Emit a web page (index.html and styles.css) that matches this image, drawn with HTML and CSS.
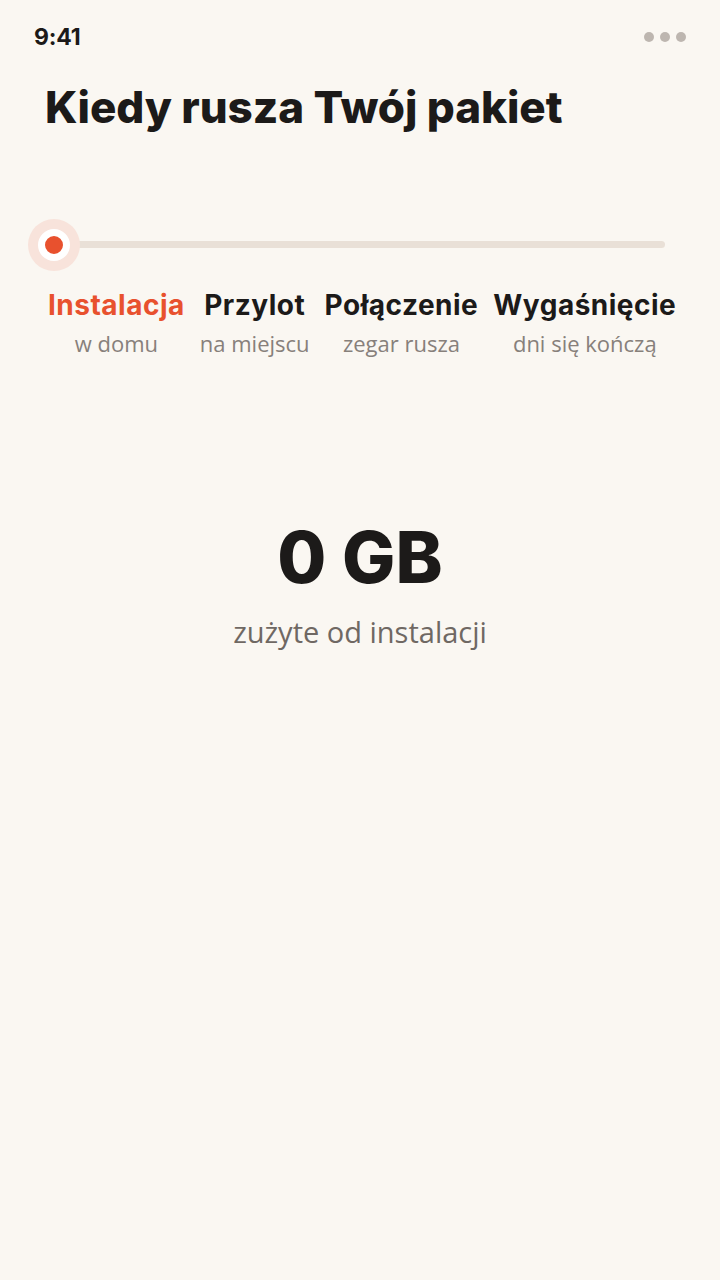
FILE: index.html
```html
<!DOCTYPE html>
<html lang="pl">
<head>
    <meta charset="UTF-8">
    <meta name="viewport" content="width=device-width, initial-scale=1.0">
    <title>Kiedy rusza Twój pakiet</title>
    <link rel="stylesheet" href="styles.css">
</head>
<body>
    <div class="status-bar">
        <span class="time">9:41</span>
        <span class="dots"><i></i><i></i><i></i></span>
    </div>

    <h1 class="title">Kiedy rusza Twój pakiet</h1>

    <!-- Slider -->
    <div class="slider">
        <div class="track"></div>
        <div class="thumb"><span class="thumb-dot"></span></div>
    </div>

    <div class="steps">
        <div class="step active">
            <span class="step-name">Instalacja</span>
            <span class="step-sub">w domu</span>
        </div>
        <div class="step">
            <span class="step-name">Przylot</span>
            <span class="step-sub">na miejscu</span>
        </div>
        <div class="step">
            <span class="step-name">Połączenie</span>
            <span class="step-sub">zegar rusza</span>
        </div>
        <div class="step">
            <span class="step-name">Wygaśnięcie</span>
            <span class="step-sub">dni się kończą</span>
        </div>
    </div>

    <div class="usage">
        <div class="usage-value">0 GB</div>
        <div class="usage-label">zużyte od instalacji</div>
    </div>
</body>
</html>
```

FILE: styles.css
```css
body {
    margin: 0;
    background-color: #faf7f2;
    font-family: Inter, "Liberation Sans", sans-serif;
    color: #1c1a19;
    width: 720px;
    height: 1280px;
    overflow: hidden;
}

.status-bar {
    display: flex;
    justify-content: space-between;
    align-items: center;
    padding: 22px 34px 0 34px;
    height: 30px;
}

.time {
    font-size: 23px;
    font-weight: 700;
    letter-spacing: -0.2px;
}

.dots {
    display: flex;
    gap: 6px;
}

.dots i {
    width: 10px;
    height: 10px;
    border-radius: 50%;
    background-color: #bdb6b0;
}

.title {
    margin: 29px 0 0 45px;
    font-size: 44px;
    font-weight: 800;
    letter-spacing: -0.1px;
    line-height: 1.2;
}

.slider {
    position: relative;
    margin: 85px 55px 0 28px;
    height: 52px;
    display: flex;
    align-items: center;
}

.track {
    flex: 1;
    margin-left: 26px;
    height: 7px;
    border-radius: 4px;
    background-color: #e9e0d7;
}

.thumb {
    position: absolute;
    left: 0;
    top: 0;
    width: 52px;
    height: 52px;
    border-radius: 50%;
    background-color: #f8e3db;
    display: flex;
    align-items: center;
    justify-content: center;
}

.thumb-dot {
    width: 18px;
    height: 18px;
    border-radius: 50%;
    background-color: #e8512e;
    border: 7px solid #ffffff;
}

.steps {
    display: flex;
    gap: 15px;
    margin: 17px 0 0 48px;
}

.step {
    display: flex;
    flex-direction: column;
    align-items: center;
}

.step-name {
    font-size: 28px;
    font-weight: 700;
    letter-spacing: 0.5px;
}

.step.active .step-name {
    color: #e8512e;
}

.step-sub {
    margin-top: 6px;
    font-size: 22px;
    color: #87807b;
    font-family: "Open Sans", sans-serif;
}

.usage {
    margin-top: 157px;
    text-align: center;
}

.usage-value {
    font-size: 71px;
    font-weight: 800;
    letter-spacing: 0;
    line-height: 1.2;
}

.usage-label {
    margin-top: 12px;
    font-size: 29px;
    color: #6f6863;
    font-family: "Open Sans", sans-serif;
}
```
